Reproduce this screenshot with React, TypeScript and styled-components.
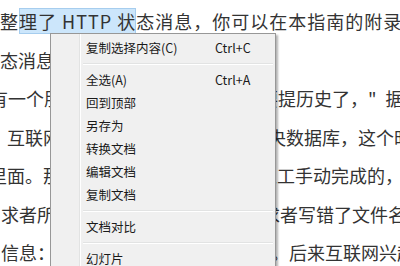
import React from "react";
import styled, { createGlobalStyle } from "styled-components";

const GlobalStyle = createGlobalStyle`
  html, body {
    margin: 0;
    padding: 0;
    background: #ffffff;
  }
  body {
    width: 400px;
    height: 266px;
    overflow: hidden;
  }
`;

type MenuEntry = { label: string; shortcut?: string };

const menuGroups: MenuEntry[][] = [
  [{ label: "复制选择内容(C)", shortcut: "Ctrl+C" }],
  [
    { label: "全选(A)", shortcut: "Ctrl+A" },
    { label: "回到顶部" },
    { label: "另存为" },
    { label: "转换文档" },
    { label: "编辑文档" },
    { label: "复制文档" },
  ],
  [{ label: "文档对比" }],
  [{ label: "幻灯片" }],
];

const App = () => {
  return (
    <>
      <GlobalStyle />
      <Page>
        <Article>
          <Line $shift={0} $spacing={1}>
            整<Selected>理了 HTTP 状</Selected>态消息，你可以在本指南的附录中找到
          </Line>
          <Line $shift={0}>态消息。</Line>
          <Line $shift={-10}>
            有一个朋友问起状态码的由来，这要提历史了，"{"\u2002"}据说
          </Line>
          <Line $shift={-11}>，互联网早期的{"\u2002"}网页都被存放在中央数据库，这个时候</Line>
          <Line $shift={-11}>里面。那个时候的网页基本都是由人工手动完成的，如果</Line>
          <Line $shift={1}>求者所需要的文件不存在，或{"\u2002"}请求者写错了文件名</Line>
          <Line $shift={1}>信息：这就是最早的四零四错误页。后来互联网兴起</Line>
        </Article>

        <ContextMenu>
          {menuGroups.map((group, gi) => (
            <React.Fragment key={gi}>
              {gi > 0 && <Separator />}
              {group.map((item) => (
                <MenuItem key={item.label}>
                  <Label>{item.label}</Label>
                  <Shortcut>{item.shortcut}</Shortcut>
                </MenuItem>
              ))}
            </React.Fragment>
          ))}
        </ContextMenu>
      </Page>
    </>
  );
};

export default App;

const Page = styled.main`
  position: relative;
  width: 400px;
  height: 266px;
  overflow: hidden;
  background: #ffffff;
`;

const Article = styled.article`
  padding-top: 2px;
  font-family: "Noto Sans CJK SC", "Noto Sans", sans-serif;
  font-size: 18px;
  color: #333333;
`;

const Line = styled.p<{ $shift: number; $spacing?: number }>`
  margin: 0 0 0 ${(p) => p.$shift}px;
  height: 38.5px;
  line-height: 38.5px;
  white-space: nowrap;
  letter-spacing: ${(p) => p.$spacing ?? 0}px;
`;

const Selected = styled.span`
  background: #cce6fb;
  box-shadow: inset 0 0 0 1px #a6cdee;
`;

const ContextMenu = styled.nav`
  position: absolute;
  top: 33px;
  left: 50px;
  width: 224px;
  padding: 2px 0;
  background: #f0f0f0;
  border: 1px solid #979797;
  box-shadow: 2px 2px 2px rgba(0, 0, 0, 0.3);
  font-family: "Noto Sans CJK SC", "Noto Sans", sans-serif;
  font-size: 12.5px;
  color: #1a1a1a;

  &::before {
    content: "";
    position: absolute;
    top: 0;
    bottom: 0;
    left: 28px;
    width: 1px;
    background: #e2e3e3;
    border-right: 1px solid #ffffff;
  }
`;

const MenuItem = styled.div`
  display: grid;
  grid-template-columns: 129px auto;
  align-items: center;
  height: 23px;
  padding-left: 35px;
`;

const Label = styled.span`
  white-space: nowrap;
`;

const Shortcut = styled.span`
  white-space: nowrap;
`;

const Separator = styled.div`
  height: 1px;
  margin: 4px 2px 3px 32px;
  background: #e2e3e3;
  border-bottom: 1px solid #ffffff;
`;
